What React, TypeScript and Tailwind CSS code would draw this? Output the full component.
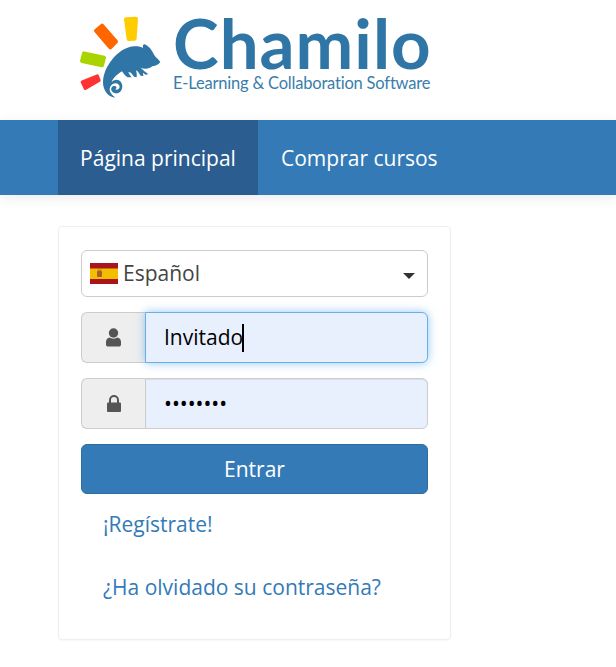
function Logo() {
  return (
    <div className="flex h-[120px] pl-[75px] pt-[10px]">
      <svg width="95" height="90" viewBox="0 0 285 270" className="shrink-0">
        <path d="M153 28 L183 26 L179 86 L161 87Z" fill="#ffcc00" stroke="#ffcc00" strokeWidth="12" strokeLinejoin="round" />
        <path d="M63 62 L81 47 L123 95 L106 112Z" fill="#ff6600" stroke="#ff6600" strokeWidth="12" strokeLinejoin="round" />
        <path d="M27 130 L87 143 L81 166 L21 153Z" fill="#aad400" stroke="#aad400" strokeWidth="12" strokeLinejoin="round" />
        <path d="M22 216 L67 198 L72 211 L31 235Z" fill="#ff3333" stroke="#ff3333" strokeWidth="10" strokeLinejoin="round" />
        <path
          d="M120 263 C98 260 84 240 84 216 C85 190 96 168 112 148 C128 128 150 111 176 109 C188 108 198 110 204 114 C203 108 204 103 208 103 C220 106 232 122 238 136 C244 144 252 150 256 156 C252 163 243 167 232 169 C226 174 220 176 212 176 C206 176 201 175 197 173 C204 180 213 187 220 193 L212 194 L204 188 L205 198 L197 197 L188 184 L183 181 C185 188 186 195 185 202 L177 200 L168 188 L160 186 C162 192 166 197 170 202 L158 202 C150 198 145 190 141 184 C128 192 114 204 110 216 C114 210 126 206 134 212 C144 220 145 236 135 246 C127 253 113 251 109 241 C107 233 113 226 120 228 C126 230 126 237 120 237 C124 241 132 239 134 231 C134 221 122 216 113 222 C103 228 101 243 109 251 C113 256 118 259 120 263Z"
          fill="#2f75a5"
        />
      </svg>
      <div className="ml-[3px] flex w-[260px] flex-col">
        <div className="mt-[3px] h-[60px] text-[69px] leading-[60px] font-bold tracking-[1px] text-[#2f75a5] [font-family:Lato,sans-serif]">
          Chamilo
        </div>
        <div className="h-[20px] text-[16.5px] leading-[20px] tracking-[-0.2px] whitespace-nowrap text-[#3a7dab] [font-family:Lato,sans-serif]">
          E-Learning &amp; Collaboration Software
        </div>
      </div>
    </div>
  )
}

function SpainFlag() {
  return (
    <svg width="28" height="21" viewBox="0 0 28 21" className="shrink-0">
      <rect width="28" height="21" fill="#aa151b" />
      <rect y="5.5" width="28" height="10.5" fill="#f1bf00" />
      <rect x="7" y="8" width="5" height="6" rx="1" fill="#ad5a2c" />
      <rect x="7.5" y="6.5" width="4" height="1.5" fill="#c8861d" />
    </svg>
  )
}

function UserIcon() {
  return (
    <svg width="15" height="19" viewBox="0 0 15 19" fill="#555555">
      <circle cx="7.5" cy="5" r="4.7" />
      <path d="M3.5 9.5 C5.5 11 9.5 11 11.5 9.5 C13.5 10 15 11.5 15 14 L15 16.5 C15 18 14 18.5 13 18.5 L2 18.5 C1 18.5 0 18 0 16.5 L0 14 C0 11.5 1.5 10 3.5 9.5Z" />
    </svg>
  )
}

function LockIcon() {
  return (
    <svg width="14" height="17" viewBox="0 0 14 17" fill="#555555">
      <path d="M3 8 L3 5 A4 4 0 0 1 11 5 L11 8" fill="none" stroke="#555555" strokeWidth="2" />
      <rect y="7.5" width="14" height="9.5" rx="1" />
    </svg>
  )
}

function App() {
  return (
    <div className="h-[667px] overflow-hidden bg-white text-[21px] [font-family:'Open_Sans',sans-serif]">
      <Logo />
      <nav className="flex h-[75px] bg-[#337ab7] pl-[58px] text-white shadow-[0_3px_12px_rgba(0,0,0,0.08)]">
        <a className="flex w-[200px] items-center justify-center bg-[#2b5d90] pt-[2px]">Página principal</a>
        <a className="flex items-center pt-[2px] pl-[23px]">Comprar cursos</a>
      </nav>

      <div className="mt-[31px] ml-[58px] flex h-[414px] w-[393px] flex-col rounded border border-[#eeeeee] px-[22px] pt-[23px] shadow-[0_1px_2px_rgba(0,0,0,0.04)]">
        <div className="flex h-[47px] items-center rounded-md border border-[#cccccc] pr-[12px] pl-[8px] text-[#444444]">
          <SpainFlag />
          <span className="ml-[5px]">Español</span>
          <span className="mt-[4px] ml-auto h-0 w-0 border-x-[6px] border-t-[6px] border-x-transparent border-t-[#333333]" />
        </div>

        <div className="mt-[15px] flex h-[51px]">
          <div className="flex w-[64px] items-center justify-center rounded-l-md border border-r-0 border-[#cccccc] bg-[#eeeeee]">
            <UserIcon />
          </div>
          <div className="flex flex-1 items-center rounded-r-md border border-[#66afe9] bg-[#e8f0fe] pl-[18px] text-black shadow-[0_0_10px_rgba(102,175,233,0.7)]">
            Invitado
            <span className="ml-[-1px] h-[28px] w-[2px] bg-black" />
          </div>
        </div>

        <div className="mt-[15px] flex h-[51px]">
          <div className="flex w-[64px] items-center justify-center rounded-l-md border border-r-0 border-[#cccccc] bg-[#eeeeee]">
            <LockIcon />
          </div>
          <div className="flex flex-1 items-center rounded-r-md border border-[#cccccc] bg-[#e8f0fe] pl-[18px] text-black shadow-[inset_0_1px_1px_rgba(0,0,0,0.075)]">
            ••••••••
          </div>
        </div>

        <button className="mt-[15px] h-[50px] rounded-md border border-[#2e6da4] bg-[#337ab7] pt-[1px] text-white">Entrar</button>

        <a className="mt-[15px] pl-[22px] leading-[30px] text-[#337ab7]">¡Regístrate!</a>
        <a className="mt-[33px] pl-[22px] leading-[30px] text-[#337ab7]">¿Ha olvidado su contraseña?</a>
      </div>
    </div>
  )
}

export default App
